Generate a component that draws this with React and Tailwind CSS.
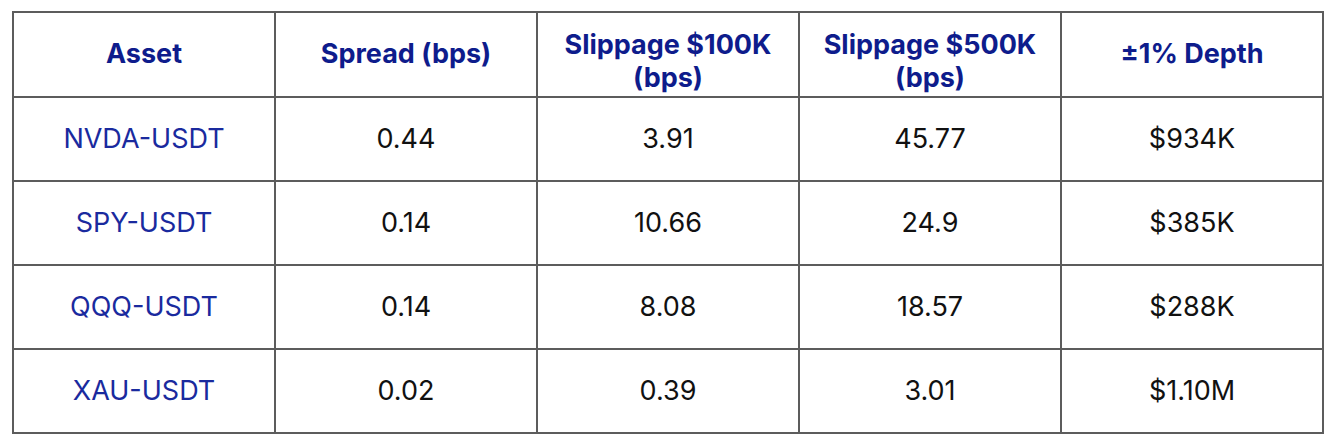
import React from "react";

const rows = [
  ["NVDA-USDT", "0.44", "3.91", "45.77", "$934K"],
  ["SPY-USDT", "0.14", "10.66", "24.9", "$385K"],
  ["QQQ-USDT", "0.14", "8.08", "18.57", "$288K"],
  ["XAU-USDT", "0.02", "0.39", "3.01", "$1.10M"],
];

const headers = [
  { t: "Asset", two: false },
  { t: "Spread (bps)", two: false },
  { t: ["Slippage $100K", "(bps)"], two: true },
  { t: ["Slippage $500K", "(bps)"], two: true },
  { t: "±1% Depth", two: false },
];

export default function App() {
  return (
    <div className="w-[1335px] h-[439px] bg-white pl-[12px] pt-[11px]" style={{ fontFamily: "Inter, 'Noto Sans', sans-serif" }}>
      <table className="w-[1312px] table-fixed border-collapse border-2 border-[#555555]">
        <thead>
          <tr className="h-[85px]">
            {headers.map((h, i) => (
              <th key={i} className="border-2 border-[#5c5c5c] p-0 align-middle text-center text-[27px] font-bold text-[#0e1c8c] leading-[33px]">
                {h.two ? (
                  <div className="pt-[12px]">
                    <div>{h.t[0]}</div>
                    <div>{h.t[1]}</div>
                  </div>
                ) : (
                  <div className="pb-[2px]">{h.t}</div>
                )}
              </th>
            ))}
          </tr>
        </thead>
        <tbody>
          {rows.map((r, ri) => (
            <tr key={ri} className="h-[84px]">
              {r.map((c, ci) => (
                <td
                  key={ci}
                  className={
                    "border-2 border-[#5c5c5c] p-0 align-middle text-center text-[27px] font-normal " +
                    (ci === 0 ? "text-[#1a2a9e]" : "text-[#111111]")
                  }
                >
                  {c}
                </td>
              ))}
            </tr>
          ))}
        </tbody>
      </table>
    </div>
  );
}
